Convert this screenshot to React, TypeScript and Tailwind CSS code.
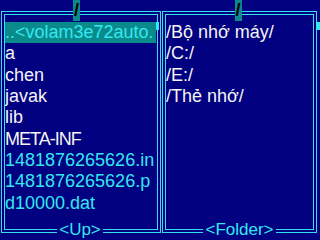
import React from "react";

type Item = { name: string; file?: boolean; sel?: boolean; caps?: boolean };

const leftItems: Item[] = [
  { name: "..<volam3e72auto.", sel: true },
  { name: "a" },
  { name: "chen" },
  { name: "javak" },
  { name: "lib" },
  { name: "META-INF", caps: true },
  { name: "1481876265626.in", file: true },
  { name: "1481876265626.p", file: true },
  { name: "d10000.dat", file: true },
];

const rightItems: Item[] = [
  { name: "/Bộ nhớ máy/" },
  { name: "/C:/" },
  { name: "/E:/" },
  { name: "/Thẻ nhớ/" },
];

function Row({ name, file, sel, caps }: Item) {
  return (
    <div
      className={
        "h-[21.33px] leading-[20px] whitespace-nowrap overflow-hidden " +
        (caps ? "tracking-[-1px] " : "") +
        (sel
          ? "bg-[#0a8a8a] text-[#33e8f0] mr-[1px]"
          : file
          ? "text-[#33e8f0]"
          : "text-[#f4f4f4]")
      }
    >
      {name}
    </div>
  );
}

function Panel({
  width,
  items,
  label,
  tabShift,
  labelShift,
  barRight,
}: {
  width: string;
  items: Item[];
  label: string;
  tabShift: string;
  labelShift: string;
  barRight: string;
}) {
  return (
    <div className={"relative h-[222px] border border-[#33e0f0] p-[2px] " + width}>
      <div className="h-full border border-[#33e0f0] pt-[7px]">
        {items.map((it) => (
          <Row key={it.name} {...it} />
        ))}
      </div>
      {/* path tab over the top border */}
      <div className={"absolute inset-x-0 top-[-12px] flex justify-center " + tabShift}>
        <div className="w-[7px] h-[21px] bg-[#0a8a8a] text-black font-bold text-[18px] leading-[21px] flex justify-center">
          /
        </div>
      </div>
      {/* scroll indicator */}
      <div className={"absolute top-[10px] w-[3px] h-[8px] bg-[#33e8f0] " + barRight} />
      {/* soft key label over the bottom border */}
      <div className={"absolute inset-x-0 top-[209px] flex justify-center " + labelShift}>
        <div className="h-[17px] leading-[17px] text-[17px] px-[2px] bg-[#000080] text-[#33e8f0]">
          {label}
        </div>
      </div>
    </div>
  );
}

export default function App() {
  return (
    <div className="w-[320px] h-[240px] overflow-hidden bg-[#000080] font-['Liberation_Sans',Arial,sans-serif] text-[18px]">
      <div className="flex gap-[1px] pl-[1px] pt-[11px]">
        <Panel
          width="w-[160px]"
          items={leftItems}
          label="<Up>"
          tabShift="pr-[9px]"
          labelShift="pr-[2px]"
          barRight="right-[1px]"
        />
        <Panel
          width="w-[155px]"
          items={rightItems}
          label="<Folder>"
          tabShift="pr-[3px]"
          labelShift=""
          barRight="right-[-4px] w-[4px]"
        />
      </div>
    </div>
  );
}
